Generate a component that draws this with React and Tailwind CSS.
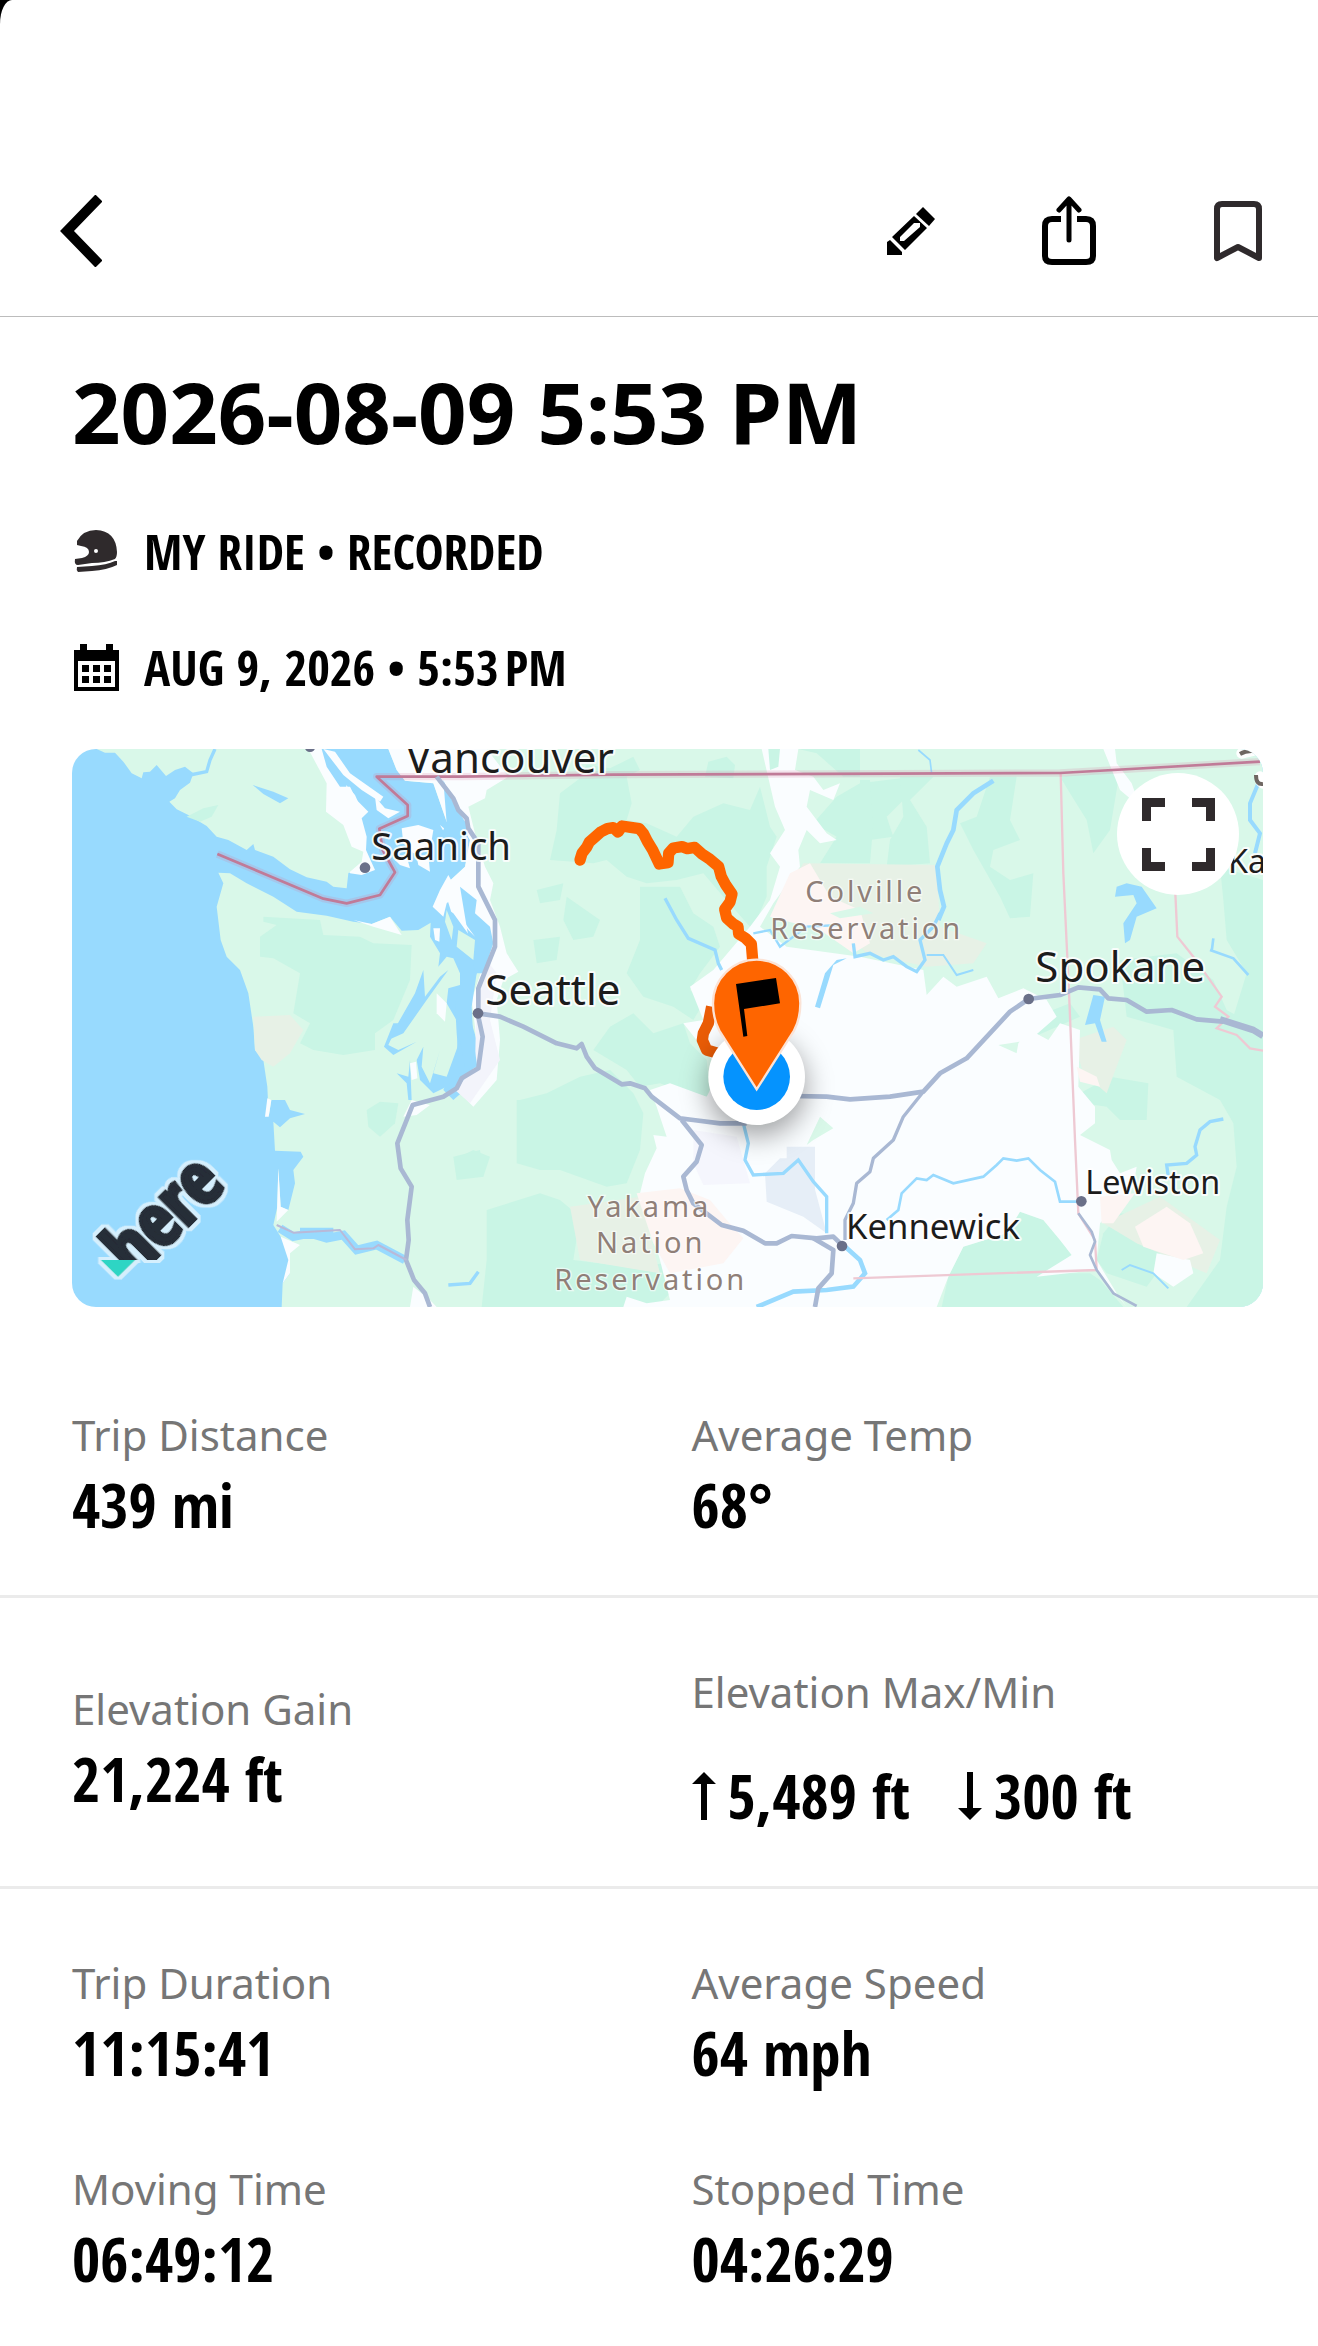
const ROUTE =
  "M1560,360 L1566,340 L1580,322 L1588,306 L1606,290 L1622,276 L1642,266 L1660,263 L1674,276 L1686,258 L1712,262 L1738,266 L1750,280 L1762,304 L1778,330 L1798,372 L1824,368 L1826,340 L1840,324 L1866,320 L1882,326 L1904,322 L1926,342 L1950,358 L1976,380 L1984,410 L1998,436 L2016,462 L2010,486 L1994,508 L2000,534 L2020,552 L2034,560 L2036,582 L2056,594 L2074,612 L2078,660";

const COUNTRY_BORDER =
  "M3600,65 L3000,99 L1660,104 L1200,110 H950 L1043,195 V228 L958,266 L968,330 L1005,397 L960,465 L860,490 L790,476 L472,342";

const PLACES = [
  { name: "Vancouver", x: 1038, y: 99, size: "text-[126px]" },
  { name: "Saanich", x: 934, y: 361, size: "text-[115px]" },
  { name: "Seattle", x: 1276, y: 795, size: "text-[126px]" },
  { name: "Spokane", x: 2926, y: 725, size: "text-[126px]" },
  { name: "Kennewick", x: 2358, y: 1496, size: "text-[104px]" },
  { name: "Lewiston", x: 3076, y: 1362, size: "text-[97px]" },
  { name: "Ka", x: 3504, y: 400, size: "text-[97px]" },
];

const RESERVATIONS = [
  { name: "Colville", x: 2416, y: 487 },
  { name: "Reservation", x: 2420, y: 596 },
  { name: "Yakama", x: 1768, y: 1430 },
  { name: "Nation", x: 1772, y: 1540 },
  { name: "Reservation", x: 1772, y: 1649 },
];

const TOWNS = [
  [750, 20],
  [915, 383],
  [1254, 820],
  [2906, 777],
  [2346, 1518],
  [3064, 1384],
];

function BackIcon() {
  return (
    <svg viewBox="0 0 42 72" className="h-[72px] w-[42px]" fill="none" stroke="#000" strokeWidth="10">
      <path d="M39 3 L7 36 L39 69" />
    </svg>
  );
}

function PencilIcon() {
  return (
    <svg viewBox="0 0 48 48" className="size-12">
      <path d="M36 0 L48 12 L42 19 L29 7 Z" />
      <path
        fillRule="evenodd"
        d="M27 9 L40 21 L18 43 L5 30 Z M27 16 L13 30 V34 H17 L33 20 V16 Z"
      />
      <path d="M3 33 L15 45 V48 H0 V35 Z" />
    </svg>
  );
}

function ShareIcon() {
  return (
    <svg
      viewBox="0 0 54 70"
      className="h-[70px] w-[54px]"
      fill="none"
      stroke="#000"
      strokeWidth="6"
      strokeLinecap="round"
      strokeLinejoin="round"
    >
      <path strokeLinecap="butt" d="M19 23 H10 Q3 23 3 30 V60 Q3 66 10 66 H44 Q51 66 51 60 V30 Q51 23 44 23 H35" />
      <path strokeWidth="5" d="M27 44 V3 M17 14 L27 3 L37 14" />
    </svg>
  );
}

function BookmarkIcon() {
  return (
    <svg
      viewBox="0 0 50 62"
      className="h-[62px] w-[50px]"
      fill="none"
      stroke="#2f2a2c"
      strokeWidth="6"
      strokeLinejoin="round"
    >
      <path d="M4 58 V9 Q4 4 9 4 H41 Q46 4 46 9 V58 L25 47 Z" />
    </svg>
  );
}

function HelmetIcon() {
  return (
    <svg viewBox="0 0 48 42" className="h-[42px] w-12" fill="#2f2a2c">
      <path
        fillRule="evenodd"
        d="M5 11 Q11 0 24 0 Q44 1 45 22 Q45 27 43 29 Q33 33 20 33 L6 35 Q2 35 3 29 L10 28 Q17 26 17 22 Q17 17 9 16 L5 15 Z M24 19 A2 2 0 1 0 24 23 A2 2 0 1 0 24 19 Z"
      />
      <path d="M5 37 L20 36 Q35 35 43 31 L45 31 V35 Q35 40 20 41 L6 42 Q4 40 5 37 Z" />
    </svg>
  );
}

function CalendarIcon() {
  return (
    <svg viewBox="0 0 48 48" className="size-12">
      <path
        fillRule="evenodd"
        d="M2 7 H8 V1 H15 V7 H34 V1 H41 V7 H47 V48 H2 Z M6 18 V44 H43 V18 Z"
      />
      <path d="M10 22h7v7h-7z M21 22h7v7h-7z M32 22h7v7h-7z M10 33h7v7h-7z M21 33h7v7h-7z M32 33h7v7h-7z" />
    </svg>
  );
}

function FullscreenIcon() {
  return (
    <svg viewBox="0 0 73 73" className="size-[73px]" fill="none" stroke="#2f2a2c" strokeWidth="9">
      <path d="M4.5 23 V4.5 H23 M50 4.5 H68.5 V23 M68.5 50 V68.5 H50 M23 68.5 H4.5 V50" />
    </svg>
  );
}

function ArrowUp() {
  return (
    <svg viewBox="0 0 24 48" className="h-12 w-6">
      <path d="M12 0 L24 12 H15 V48 H9 V12 H0 Z" />
    </svg>
  );
}

function ArrowDown() {
  return (
    <svg viewBox="0 0 24 48" className="h-12 w-6">
      <path d="M12 48 L24 36 H15 V0 H9 V36 H0 Z" />
    </svg>
  );
}

function HereLogo() {
  return (
    <g filter="url(#halo)">
      <path d="M122,1560 H226 L174,1611 Z" fill="#2fd5c4" />
      <g clipPath="url(#logoClip)">
        <text
          x="214"
          y="1592"
          transform="rotate(-45 250 1592)"
          fill="#272d37"
          stroke="#272d37"
          strokeWidth="12"
          className="font-['Open_Sans_Condensed','Open_Sans',sans-serif] text-[222px] font-bold"
        >
          here
        </text>
      </g>
    </g>
  );
}

function RouteMap() {
  return (
    <svg
      viewBox="36 27 3573 1674"
      className="block h-auto w-full font-['Noto_Sans',sans-serif]"
      role="img"
      aria-label="Route map"
    >
      <defs>
        <filter id="soft" x="-50%" y="-50%" width="200%" height="200%">
          <feGaussianBlur stdDeviation="40" />
        </filter>
        <filter id="halo" x="-10%" y="-10%" width="120%" height="120%">
          <feMorphology in="SourceAlpha" operator="dilate" radius="9" result="grown" />
          <feFlood floodColor="#d5effd" />
          <feComposite in2="grown" operator="in" result="outline" />
          <feMerge>
            <feMergeNode in="outline" />
            <feMergeNode in="SourceGraphic" />
          </feMerge>
        </filter>
        <clipPath id="logoClip">
          <rect x="100" y="1200" width="450" height="358" />
        </clipPath>
      </defs>

      <rect x="36" y="27" width="3573" height="1674" fill="#98dafe" />

      {/* Vancouver Island */}
      <path
        fill="#fafdff"
        d="M740,27 H785 L800,80 L840,140 L870,140 L890,180 L925,215 L905,235 L920,290 L918,330 L945,390 L905,405 L870,400 L800,300 Z"
      />
      <path
        fill="#d9f8e9"
        d="M110,27 H745 L800,130 L798,215 L850,255 L875,320 L910,335 L905,365 L865,400 L860,445 L820,440 L800,425 L740,412 L690,388 L640,350 L585,330 L580,312 L560,330 L505,300 L470,290 L440,258 L385,225 L350,208 L328,185 L345,175 L360,150 L390,128 L400,100 L375,80 L345,90 L318,108 L290,75 L270,95 L250,97 L245,115 L215,100 L190,65 L165,38 L135,38 Z"
      />
      <path fill="#c9f5e5" d="M380,230 L430,205 L475,195 L455,230 L420,245 Z" />
      <path fill="#98dafe" d="M578,135 L640,155 L685,175 L660,190 L610,162 Z" />
      <path fill="none" stroke="#98dafe" strokeWidth="10" d="M390,105 L440,95 L450,60 L465,27" />

      {/* Gulf and San Juan islands */}
      <g fill="#fafdff">
        <path d="M790,27 L825,35 L870,100 L920,135 L970,170 L960,185 L905,150 L850,105 Z" />
        <path d="M858,135 L885,165 L905,210 L890,230 L868,190 Z" />
        <path d="M945,170 L975,205 L1020,215 L985,235 L950,210 Z" />
        <path d="M1025,265 L1075,255 L1120,270 L1110,330 L1060,340 L1030,310 Z" />
        <path d="M1005,360 L1040,350 L1050,385 L1020,375 Z" />
        <path d="M1070,350 L1105,345 L1110,395 L1075,375 Z" />
        <path d="M1140,255 L1165,275 L1180,300 L1160,290 Z" />
      </g>

      {/* Mainland */}
      <path
        fill="#d9f8e9"
        d="M985,27 H3609 V1701 H665 L668,1630 L690,1600 L690,1540 L662,1490 L640,1455 L652,1400 L655,1285 L662,1400 L685,1410 L705,1330 L700,1290 L730,1250 L722,1235 L645,1232 L640,1145 L660,1162 L690,1135 L735,1122 L690,1110 L675,1080 L634,1080 L626,1130 L622,1040 L610,960 L585,930 L580,860 L565,760 L540,690 L500,650 L482,600 L470,500 L490,430 L475,398 L510,400 L560,430 L640,470 L710,515 L800,527 L880,545 L935,552 L990,530 L1025,572 L1075,570 L1112,548 L1110,590 L1140,640 L1135,680 L1160,650 L1180,655 L1200,700 L1200,735 L1165,745 L1160,790 L1195,850 L1190,960 L1150,1050 L1180,1080 L1260,1010 L1250,900 L1220,800 L1250,700 L1245,610 L1180,520 L1150,440 L1215,380 L1230,300 L1190,230 L1160,245 L1120,130 L1035,122 L1010,90 Z"
      />

      {/* Forests */}
      <g fill="#c9f5e5">
        <path d="M610,530 L780,540 L790,585 L900,590 L940,610 L1055,615 L1050,720 L1000,840 L945,880 L945,930 L850,945 L760,930 L720,910 L750,850 L700,820 L720,700 L640,655 L600,650 L600,590 L650,555 L610,545 Z" />
        <path d="M920,1110 L960,1085 L1015,1090 L1005,1150 L960,1190 L925,1160 Z" />
        <path d="M1180,1250 L1260,1230 L1270,1310 L1190,1320 Z" />
        <path d="M1500,160 L1560,115 L1700,110 L1715,190 L1700,240 L1760,250 L1850,290 L1900,230 L1990,190 L2070,210 L2100,140 L2130,260 L2150,290 L2120,380 L2120,470 L2090,540 L2070,560 L1990,470 L1930,400 L1850,420 L1760,430 L1700,410 L1640,360 L1600,370 L1470,360 L1490,270 Z" />
        <path d="M1560,110 L1580,75 L1650,85 L1720,50 L1740,90 L1700,110 Z" />
        <path d="M1935,110 L1945,65 L2000,50 L2025,75 L2020,115 Z" />
        <path d="M1430,450 L1510,430 L1500,480 L1440,490 Z" />
        <path d="M1520,470 L1620,540 L1600,590 L1540,600 L1510,540 Z" />
        <path d="M1740,440 L1860,440 L1900,520 L1960,560 L1980,620 L1920,700 L1890,750 L1930,790 L1900,840 L1840,800 L1750,770 L1700,700 L1740,600 Z" />
        <path d="M1420,600 L1500,590 L1490,660 L1430,670 Z" />
        <path d="M1650,860 L1720,820 L1780,880 L1870,850 L1890,910 L1940,960 L1950,1070 L1880,1060 L1800,1030 L1740,1040 L1700,990 L1600,930 Z" />
        <path d="M1380,1080 L1460,1060 L1560,1010 L1650,990 L1720,1060 L1750,1120 L1740,1230 L1700,1330 L1640,1340 L1500,1290 L1440,1290 L1370,1270 L1370,1080 Z" />
        <path d="M1200,1250 L1240,1230 L1290,1250 L1270,1310 L1200,1310 Z" />
        <path d="M1280,1410 L1440,1360 L1500,1380 L1560,1430 L1540,1560 L1700,1580 L1820,1570 L1850,1640 L1800,1690 L1690,1701 H1265 L1280,1560 Z" />
        <path d="M2215,27 L2400,27 L2400,110 L2350,110 L2270,40 Z" />
        <path d="M2260,250 L2330,170 L2400,130 L2560,110 L2540,170 L2480,230 L2500,290 L2430,300 L2400,370 L2280,370 L2330,290 Z" />
        <path d="M2520,110 L2620,110 L2550,180 L2600,260 L2610,370 L2480,380 L2490,300 L2530,230 Z" />
        <path d="M2400,120 L2430,120 L2440,250 L2430,370 L2400,370 Z" />
        <path d="M2700,250 L2750,230 L2790,110 L2870,110 L2850,240 L2880,300 L2800,330 L2790,380 L2850,420 L2920,400 L2910,530 L2850,535 L2820,470 L2740,330 Z" />
        <path d="M3000,110 L3180,90 L3150,270 L3100,340 L3080,240 L3030,160 Z" />
        <path d="M3480,380 L3609,420 V900 L3520,830 L3560,700 L3500,600 L3490,480 Z" />
        <path d="M2850,860 L3030,790 L3060,830 L2900,900 Z" />
        <path d="M3180,660 L3350,640 L3460,720 L3500,810 L3609,870 V1701 H3380 L3480,1560 L3500,1400 L3530,1280 L3520,1150 L3480,1080 L3350,1010 L3340,870 L3200,830 Z" />
        <path d="M3060,1060 L3150,1010 L3265,1030 L3260,1140 L3180,1140 L3140,1100 L3070,1090 Z" />
        <path d="M2645,1701 L2665,1610 L2710,1520 L2840,1480 L2880,1415 L2950,1440 L3000,1500 L3035,1545 L2960,1600 L3090,1600 L3120,1620 L3190,1701 Z" />
        <path d="M3130,1480 L3180,1420 L3260,1430 L3300,1530 L3290,1600 L3260,1640 L3140,1600 L3110,1560 Z" />
      </g>

      {/* Tribal and reserve tints */}
      <g fill="#e7f1e6">
        <path d="M580,830 L690,825 L730,870 L690,940 L640,980 L605,960 L585,930 Z" />
        <path d="M2230,370 L2630,375 L2640,560 L2780,610 L2740,670 L2600,680 L2420,640 L2200,420 Z" />
        <path d="M3040,900 L3160,860 L3200,900 L3140,1060 L3070,1000 Z" />
        <path d="M1530,1400 L1740,1370 L1800,1600 L1560,1560 Z" />
        <path d="M3130,1450 L3300,1370 L3480,1500 L3440,1600 L3230,1510 Z" />
      </g>

      {/* Puget lowland, Okanogan valley and Columbia basin */}
      <g fill="#fafdff">
        <path d="M985,27 H1280 L1345,110 L1280,150 L1275,175 L1225,200 L1250,300 L1275,380 L1300,430 L1290,480 L1320,560 L1340,640 L1375,695 L1330,720 L1310,780 L1320,900 L1310,1020 L1240,1100 L1200,1060 L1255,980 L1245,860 L1235,780 L1265,690 L1220,600 L1175,520 L1150,440 L1215,380 L1230,300 L1190,230 L1160,245 L1120,130 L1035,122 L1010,90 Z" />
        <path d="M2105,27 H2215 L2205,90 L2260,110 L2290,150 L2340,130 L2320,180 L2250,150 L2240,200 L2300,280 L2330,300 L2280,310 L2240,270 L2215,330 L2220,380 L2140,490 L2100,560 L2180,620 L2400,650 L2590,690 L2600,765 L2650,710 L2690,740 L2780,710 L2815,775 L2890,745 L2960,780 L2990,830 L2910,900 L2815,915 L2870,940 L2860,995 L2875,910 L2910,870 L2965,900 L3000,850 L3060,870 L3055,1040 L3105,1100 L3105,1150 L3060,1185 L3150,1230 L3155,1260 L3180,1300 L3230,1280 L3220,1340 L3120,1450 L3110,1560 L3170,1660 L3200,1701 L3110,1590 L2930,1610 L3035,1545 L3000,1500 L2950,1440 L2880,1415 L2840,1480 L2710,1520 L2665,1610 L2630,1701 H1690 L1700,1670 L1760,1690 L1830,1680 L1800,1560 L1740,1360 L1755,1300 L1790,1225 L1780,1185 L1820,1190 L1790,1100 L1770,1050 L1830,1030 L1940,1070 L1980,990 L1870,850 L1930,840 L1890,740 L1960,690 L2070,560 L2130,480 L2160,380 L2130,340 L2175,270 L2145,200 Z" />
        <path d="M3130,27 H3165 L3170,70 L3215,130 L3240,200 L3180,150 Z" />
        <path d="M3290,1540 L3390,1560 L3400,1600 L3340,1640 L3280,1600 Z" />
      </g>
      <path fill="#c9f5e5" d="M2125,27 H2160 L2155,80 L2130,90 Z" />
      <g fill="#fdf5f3">
        <path d="M2190,400 L2250,370 L2310,470 L2400,510 L2430,610 L2380,640 L2280,570 L2130,530 Z" />
        <path d="M1730,1360 L1860,1345 L1950,1380 L2000,1440 L2050,1495 L1990,1570 L1830,1600 L1780,1510 Z" />
        <path d="M3120,1370 L3225,1360 L3160,1450 L3125,1450 Z" />
        <path d="M3225,1460 L3320,1400 L3390,1450 L3430,1540 L3370,1560 L3250,1520 Z" />
        <path d="M3050,980 L3110,1010 L3120,1040 L3060,1025 Z" />
      </g>
      <path fill="#d9f8e9" d="M2310,520 L2400,500 L2440,520 L2340,535 Z" />
      <path fill="#f3f4fb" d="M1280,660 L1310,700 L1290,840 L1320,960 L1230,1090 L1185,1050 L1245,980 L1250,760 Z" />
      <path fill="#f5f6fd" d="M1900,1170 L2030,1190 L2070,1330 L1930,1335 L1900,1270 Z" />
      <path fill="#e6eef7" d="M2160,1255 H2265 L2260,1330 L2300,1480 L2230,1430 L2120,1385 L2115,1300 Z M2180,1220 H2265 V1370 L2180,1300 Z" />
      <path fill="#d9f8e9" d="M2280,1130 L2320,1165 L2260,1200 L2240,1215 Z" />

      {/* Puget Sound */}
      <g fill="#98dafe">
        <path d="M1150,120 L1180,190 L1225,260 L1215,370 L1150,440 L1120,330 L1160,250 Z" />
        <path d="M1120,480 L1180,520 L1245,610 L1250,700 L1235,800 L1240,900 L1252,980 L1200,1000 L1190,880 L1185,790 L1205,730 L1195,660 L1150,620 L1110,540 Z" />
        <path d="M1165,690 L1100,780 L1030,880 L985,900 L1065,760 L1090,690 L1095,770 L1140,710 Z" />
        <path d="M1015,850 L985,915 L1015,930 L1070,905 L1000,945 L972,920 L1000,850 Z" />
        <path d="M1090,920 L1085,980 L1110,1030 L1140,930 L1120,1000 L1160,1010 L1200,900 L1215,980 L1160,1040 L1120,1060 L1080,1020 L1070,960 Z" />
        <path d="M1050,960 L1055,1080 L1045,1080 L1040,1030 L1010,1000 L1045,1010 Z" />
        <path d="M1200,440 L1250,480 L1245,520 L1290,560 L1300,610 L1270,700 L1245,700 L1220,560 Z" />
      </g>
      <g fill="#fafdff">
        <path d="M1165,405 L1195,460 L1160,490 L1150,530 L1118,500 L1140,450 Z" />
        <path d="M1200,500 L1215,550 L1245,590 L1225,570 L1195,530 Z" />
        <path d="M1120,565 H1140 L1138,605 L1125,600 Z" />
        <path d="M1130,760 L1160,790 L1155,845 L1130,820 Z" />
        <path d="M1050,970 L1068,965 L1072,1015 L1055,1020 Z" />
        <path d="M880,540 L935,552 L990,530 L1025,585 L940,560 Z" />
        <path d="M655,1285 L662,1400 L685,1410 L650,1445 Z M634,1080 L626,1130 L615,1130 L622,1075 Z" />
        <path d="M662,1490 L720,1515 L690,1540 L690,1600 L668,1630 L685,1560 Z" />
        <path d="M1055,1080 L1110,1095 L1070,1125 L1030,1130 Z" />
        <path d="M1050,1701 L1060,1640 L1110,1680 L1130,1701 Z" />
      </g>
      <path fill="#d9f8e9" d="M1160,510 L1180,560 L1175,600 L1155,545 Z M1195,570 L1245,600 L1240,660 L1190,620 Z" />

      {/* Rivers and lakes */}
      <g fill="none" stroke="#98dafe" strokeWidth="10">
        <path strokeWidth="26" d="M660,1465 L700,1490 L750,1480 L800,1495 L850,1485 L890,1530 L950,1515 L1035,1560" />
        <path strokeWidth="34" d="M720,1480 H820" />
        <path d="M1815,475 L1850,540 L1885,595 L1965,630 L1975,670 L1985,690" />
        <path d="M2575,30 L2610,60 L2615,100" strokeWidth="5" />
        <path d="M2800,122 L2740,160 L2690,210 L2680,270 L2660,310 L2632,380 L2640,450 L2652,500 L2635,540" strokeWidth="14" />
        <path d="M2640,520 L2620,560 L2580,600 L2595,660 L2570,695 L2540,680 L2500,650 L2470,660 L2430,640 L2385,650 L2380,610" />
        <path d="M2600,645 L2650,645 L2690,705 L2740,690" strokeWidth="6" />
        <path d="M2080,580 L2130,570 L2160,620 L2240,560 L2340,555" strokeWidth="7" />
        <path d="M3595,130 L3570,190 L3570,240 L3600,280 L3585,340" strokeWidth="12" />
        <path d="M3450,630 L3520,655 L3565,705 M3460,595 L3455,635" strokeWidth="8" />
        <path d="M2050,1150 L2065,1210 L2055,1260 L2080,1305 L2170,1300 L2215,1260 L2260,1325 L2300,1370 V1480" />
        <path d="M2480,1440 L2515,1410 L2525,1360 L2570,1315 L2600,1320 L2620,1305 L2680,1330 L2770,1310 L2810,1275 L2830,1255 L2870,1262 L2905,1255 L2940,1290 L2985,1325 L3000,1385 H3055" strokeWidth="8" />
        <path d="M3490,1137 L3450,1145 L3420,1170 L3405,1220 L3410,1245 L3380,1270 L3320,1275 L3325,1310" />
        <path d="M2350,1515 L2400,1560 L2415,1600 L2380,1640 L2300,1650 L2200,1655 L2090,1701" strokeWidth="14" />
        <path d="M1165,1635 L1230,1630 L1255,1595" />
        <path d="M3185,1590 L3210,1575 L3280,1600 L3325,1645" strokeWidth="6" />
      </g>
      <g fill="#98dafe">
        <path d="M2360,655 L2320,675 L2280,805 L2265,800 L2295,700 L2330,660 Z" />
        <path d="M3165,470 L3170,440 L3200,430 L3245,440 L3290,505 L3230,530 L3210,600 L3195,610 L3190,550 L3230,490 L3220,465 Z" />
        <path d="M3100,765 L3135,770 L3120,840 L3140,905 L3125,905 L3105,850 L3075,855 Z" />
      </g>

      {/* State and national borders */}
      <g fill="none" stroke="#eec9d3" strokeWidth="7">
        <path d="M3002,100 L3010,400 L3028,780 L3045,1200 L3055,1420 L3105,1500 L3110,1590 L2380,1615" />
        <path d="M3346,460 L3352,590 L3400,650 L3485,770 L3465,800 L3505,830 L3470,865 L3530,885 L3570,925 L3609,932" />
      </g>
      <g fill="none" strokeLinejoin="round">
        <path d={COUNTRY_BORDER} stroke="#d97fa0" strokeOpacity="0.2" strokeWidth="22" />
        <path d={COUNTRY_BORDER} stroke="#c07b98" strokeWidth="8" />
      </g>

      {/* Highways */}
      <g fill="none" stroke="#a9b8d3" strokeWidth="14" strokeLinejoin="round">
        <path d="M1130,110 L1180,175 L1195,210 L1220,235 L1225,265 L1255,310 V440 L1305,540 V620 L1255,745 V830 L1268,890 L1255,985 L1205,1015 L1190,1045 L1150,1070 L1058,1095 L1012,1210 L1022,1285 L1055,1340 L1042,1440 L1046,1500 L1038,1560 L1062,1620 L1095,1660 L1110,1701" />
        <path d="M1254,820 L1320,830 L1390,860 L1490,910 L1550,925 L1565,912 L1580,950 L1605,985 L1685,1033 L1710,1030 L1755,1045 L1775,1070 L1860,1135 L1900,1140 L1980,1150 H2060" />
        <path d="M2200,1068 L2300,1070 L2370,1078 L2490,1070 L2590,1055 L2640,1000 L2720,955 L2850,815 L2906,777 L3000,765 L3055,742 L3120,748 L3145,775 L3200,780 L3260,815 L3335,810 L3410,838 L3490,845" />
        <path d="M3480,838 L3580,870 L3609,888" strokeWidth="20" />
        <path d="M1865,1140 L1925,1215 L1910,1265 L1870,1310 L1880,1350 L1900,1390 L1985,1455 L2050,1472 L2115,1510 L2150,1510 L2195,1488 L2270,1495 L2320,1490 L2346,1515" />
        <path d="M2260,1495 L2320,1530 L2315,1600 L2275,1645 L2265,1701" />
        <path d="M2590,1055 L2530,1130 L2500,1200 L2440,1255 L2430,1295 L2390,1330 L2380,1390 L2355,1440 V1500" strokeWidth="10" />
        <path d="M3055,1420 L3095,1475 L3105,1505 L3090,1545 L3110,1590 L3160,1660 L3230,1698" strokeWidth="8" />
        <path d="M650,1455 L700,1478 L840,1470 L885,1528 L940,1525 L955,1515 L1040,1560" strokeWidth="6" stroke="#b9b9d8" />
      </g>
      <g fill="#6a7089">
        {TOWNS.map(([cx, cy]) => (
          <circle key={`${cx}-${cy}`} cx={cx} cy={cy} r="16" />
        ))}
      </g>

      {/* Labels */}
      <g
        fill="#1c1c1c"
        stroke="#fff"
        strokeOpacity="0.85"
        strokeWidth="12"
        strokeLinejoin="round"
        className="[paint-order:stroke]"
      >
        {PLACES.map((place) => (
          <text key={place.name} x={place.x} y={place.y} className={place.size}>
            {place.name}
          </text>
        ))}
      </g>
      <g
        fill="#8f7f78"
        stroke="#fff"
        strokeOpacity="0.6"
        strokeWidth="8"
        textAnchor="middle"
        className="text-[87px] tracking-widest [paint-order:stroke]"
      >
        {RESERVATIONS.map((label) => (
          <text key={`${label.name}-${label.y}`} x={label.x} y={label.y}>
            {label.name}
          </text>
        ))}
      </g>
      <g fill="none" stroke="#fff" strokeWidth="32" strokeLinecap="round">
        <path d="M3545,40 L3580,32 M3600,110 Q3600,125 3609,130" />
        <path stroke="#6f6762" strokeWidth="12" strokeLinecap="butt" d="M3540,42 Q3560,30 3588,34 M3588,105 Q3588,135 3609,132" />
      </g>

      {/* Route and end marker */}
      <path d={ROUTE} fill="none" stroke="#fe6500" strokeWidth="34" strokeLinecap="round" strokeLinejoin="round" />
      <path d="M1955,800 L1945,850 L1930,880 L1927,900 L1940,930 L1975,940" fill="none" stroke="#ea5c06" strokeWidth="34" strokeLinejoin="round" />
      <circle cx="2090" cy="1040" r="150" fill="#000" fillOpacity="0.35" filter="url(#soft)" />
      <circle cx="2090" cy="1010" r="145" fill="#fff" />
      <circle cx="2090" cy="1010" r="100" fill="#0593fe" />
      <path
        fill="#fe6500"
        stroke="#fbe3d6"
        strokeWidth="7"
        d="M2090,1048 L1978,872 Q1959,836 1959,790 A131,131 0 0 1 2221,790 Q2221,836 2202,872 Z"
      />
      <path d="M2028,732 L2148,714 L2160,790 L2052,807 L2062,888 L2050,890 Z" />

      <HereLogo />
    </svg>
  );
}

function Stat({ label, children, spaced = false }) {
  return (
    <div className={spaced ? "flex flex-col gap-[34px]" : "flex flex-col"}>
      <dt className="text-[42px] leading-[60px] text-[#767676]">{label}</dt>
      <dd className="font-['Open_Sans_Condensed','Open_Sans',sans-serif] text-[61px] leading-[80px] font-bold">
        {children}
      </dd>
    </div>
  );
}

function StatSection({ children }) {
  return (
    <dl className="grid grid-cols-2 items-center gap-x-12 gap-y-[66px] border-t-3 border-[#ebebeb] pt-16 pr-[55px] pb-[50px] pl-[72px] first:border-t-0 first:pt-0">
      {children}
    </dl>
  );
}

export default function App() {
  return (
    <div className="bg-black">
      <div className="min-h-screen rounded-tl-[12px_24px] bg-white font-['Noto_Sans',sans-serif] text-black">
        <header className="flex items-center justify-between border-b border-[#bcbcbc] pt-[195px] pr-[55px] pb-[49px] pl-[60px]">
          <button type="button" aria-label="Back">
            <BackIcon />
          </button>
          <div className="flex items-center gap-[107px]">
            <button type="button" aria-label="Edit">
              <PencilIcon />
            </button>
            <button type="button" aria-label="Share">
              <ShareIcon />
            </button>
            <button type="button" aria-label="Bookmark" className="flex w-[60px] justify-end">
              <BookmarkIcon />
            </button>
          </div>
        </header>

        <main>
          <section className="pt-9 pr-[55px] pl-[72px]">
            <h1 className="text-[85px] leading-[116px] font-bold">2026-08-09 5:53 PM</h1>
            <div className="mt-[50px] flex flex-col gap-[52px] font-['Open_Sans_Condensed','Open_Sans',sans-serif] text-[49px] leading-[64px] font-bold">
              <p className="flex items-center gap-6">
                <HelmetIcon />
                MY RIDE • RECORDED
              </p>
              <p className="flex items-center gap-6">
                <CalendarIcon />
                AUG 9, 2026 • 5:53{"\u202f"}PM
              </p>
            </div>
            <div className="relative mt-[50px] overflow-hidden rounded-3xl">
              <RouteMap />
              <button
                type="button"
                aria-label="Full screen map"
                className="absolute top-6 right-6 flex size-[122px] items-center justify-center rounded-full bg-white"
              >
                <FullscreenIcon />
              </button>
            </div>
          </section>

          <div className="mt-[98px]">
            <StatSection>
              <Stat label="Trip Distance">439 mi</Stat>
              <Stat label="Average Temp">68°</Stat>
            </StatSection>
            <StatSection>
              <Stat label="Elevation Gain">21,224 ft</Stat>
              <Stat label="Elevation Max/Min" spaced>
                <span className="flex gap-12">
                  <span className="flex items-center gap-3">
                    <ArrowUp />
                    5,489 ft
                  </span>
                  <span className="flex items-center gap-3">
                    <ArrowDown />
                    300 ft
                  </span>
                </span>
              </Stat>
            </StatSection>
            <StatSection>
              <Stat label="Trip Duration">11:15:41</Stat>
              <Stat label="Average Speed">64 mph</Stat>
              <Stat label="Moving Time">06:49:12</Stat>
              <Stat label="Stopped Time">04:26:29</Stat>
            </StatSection>
          </div>
        </main>
      </div>
    </div>
  );
}
